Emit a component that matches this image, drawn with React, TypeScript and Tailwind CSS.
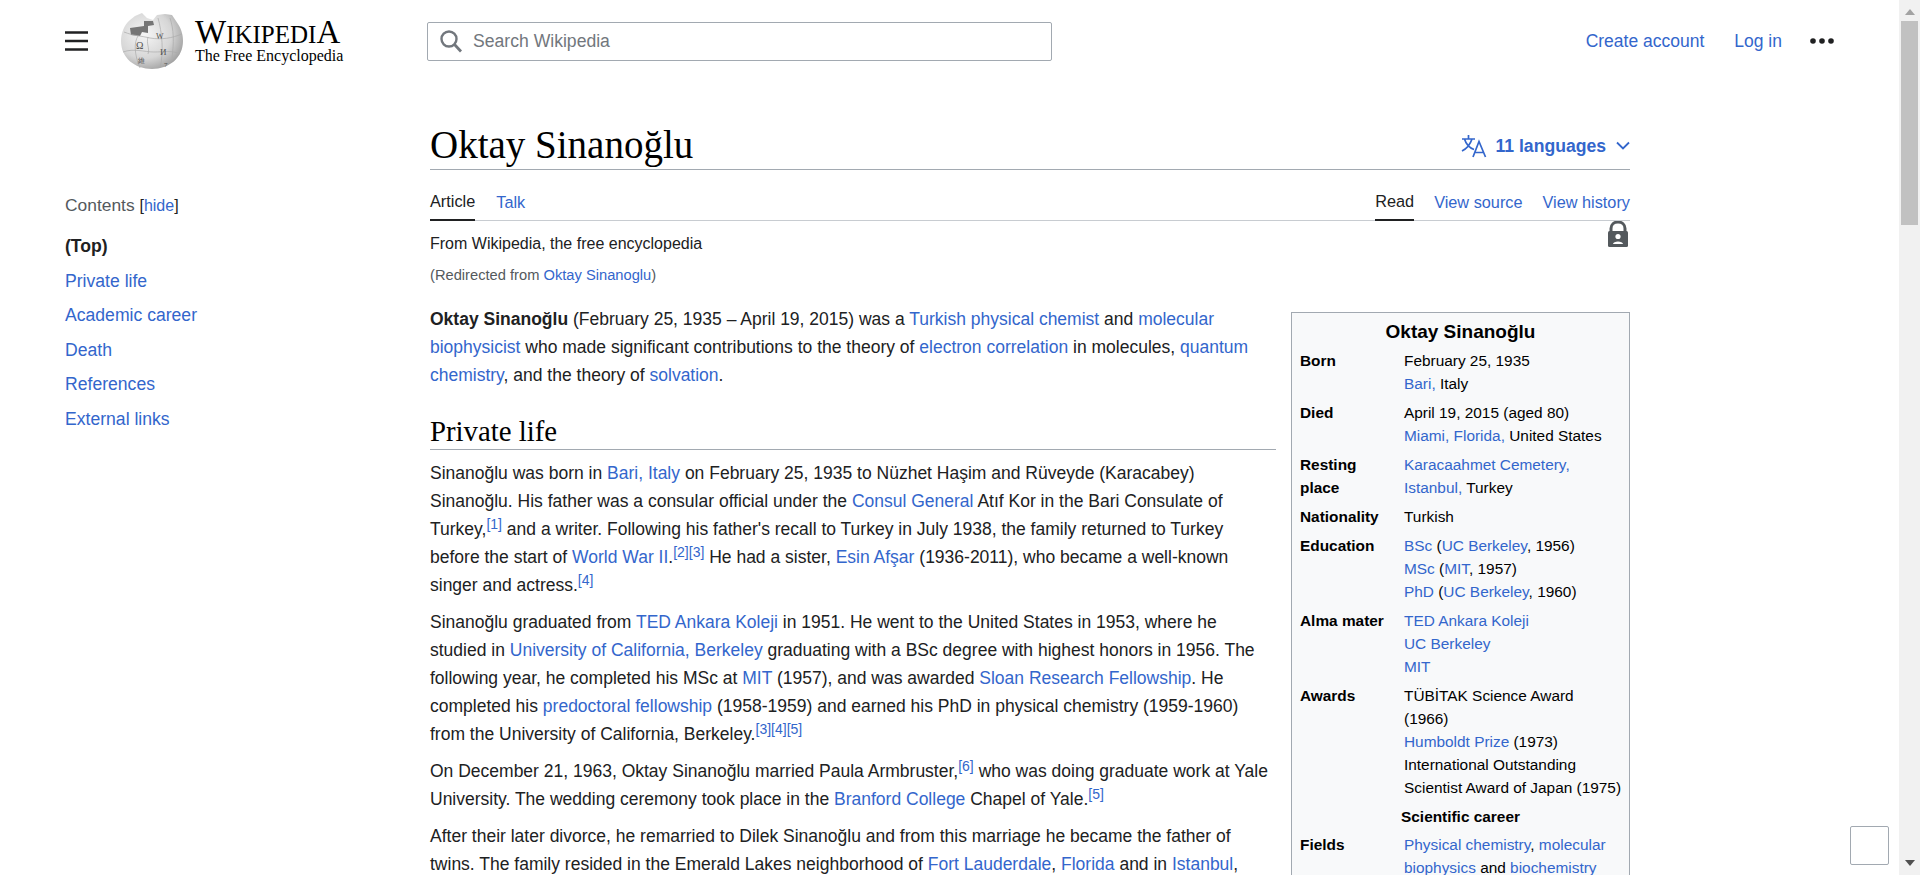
import React from "react";

const A = ({ children }: { children: React.ReactNode }) => <a className="text-[#3366cc]">{children}</a>;
const Sup = ({ children }: { children: React.ReactNode }) => (
  <sup className="text-[14px] leading-[0] top-0 align-[6px] text-[#3366cc]">{children}</sup>
);

function Globe() {
  return (
    <svg width="64" height="58" viewBox="0 0 64 58" className="shrink-0">
      <defs>
        <radialGradient id="g" cx="38%" cy="38%" r="72%">
          <stop offset="0%" stopColor="#f6f6f6" />
          <stop offset="60%" stopColor="#d6d6d6" />
          <stop offset="100%" stopColor="#989898" />
        </radialGradient>
      </defs>
      <path d="M10 8 L15 4 L22 1 L27 6 L33 8 L37 3 L45 2 L52 3 L58 12 C62 18 63 24 63 29 C63 46 49 57 32 57 C15 57 1 46 1 29 C1 21 4 13 10 8 Z" fill="url(#g)" />
      <path d="M10 16 L24 14 L24 9 L33 9 L34 13 L28 14 L28 21 L22 20 L20 24 L11 23 Z" fill="#757575" />
      <g fill="none" stroke="#ababab" strokeWidth="0.7">
        <path d="M4 20 C14 24 22 24 30 26 C42 28 52 26 62 22" />
        <path d="M3 40 C14 36 24 40 34 40 C44 40 52 38 60 42" />
        <path d="M18 24 C14 30 14 42 20 56" />
        <path d="M38 6 C42 20 44 40 40 56" />
        <path d="M28 25 C26 32 30 36 28 42" />
        <path d="M50 6 C54 18 54 30 52 46" />
      </g>
      <g fontFamily="'Liberation Serif', serif" fill="#505050">
        <text x="16" y="37" fontSize="10">Ω</text>
        <text x="36" y="27" fontSize="8">W</text>
        <text x="40" y="43" fontSize="9">И</text>
        <text x="18" y="51" fontSize="7">維</text>
        <text x="44" y="55" fontSize="7">7</text>
      </g>
    </svg>
  );
}

const rows: { label: React.ReactNode; lines: React.ReactNode[] }[] = [
  { label: "Born", lines: ["February 25, 1935", <><A>Bari</A><A>,</A> Italy</>] },
  { label: "Died", lines: ["April 19, 2015 (aged 80)", <><A>Miami</A><A>,</A> <A>Florida</A><A>,</A> United States</>] },
  { label: <>Resting<br />place</>, lines: [<A>Karacaahmet Cemetery,</A>, <><A>Istanbul</A><A>,</A> Turkey</>] },
  { label: "Nationality", lines: ["Turkish"] },
  { label: "Education", lines: [<><A>BSc</A> (<A>UC Berkeley</A>, 1956)</>, <><A>MSc</A> (<A>MIT</A>, 1957)</>, <><A>PhD</A> (<A>UC Berkeley</A>, 1960)</>] },
  { label: "Alma mater", lines: [<A>TED Ankara Koleji</A>, <A>UC Berkeley</A>, <A>MIT</A>] },
  { label: "Awards", lines: ["TÜBİTAK Science Award", "(1966)", <><A>Humboldt Prize</A> (1973)</>, "International Outstanding", "Scientist Award of Japan (1975)"] },
];

function Infobox() {
  return (
    <aside className="w-[339px] shrink-0 ml-[15px] mt-[22px] h-[700px] border border-[#a2a9b1] bg-[#f8f9fa] text-[15.4px] leading-[23px] text-[#000] px-[8px] pt-[2px]">
      <div className="text-center text-[19px] font-bold leading-[33px] mb-[1px]">Oktay Sinanoğlu</div>
      {rows.map((r, i) => (
        <div key={i} className="flex mb-[6px]">
          <div className="w-[104px] shrink-0 font-bold">{r.label}</div>
          <div className="whitespace-nowrap">
            {r.lines.map((l, j) => <div key={j}>{l}</div>)}
          </div>
        </div>
      ))}
      <div className="text-center font-bold mt-[4px] mb-[5px] leading-[23px]">Scientific career</div>
      <div className="flex">
        <div className="w-[104px] shrink-0 font-bold">Fields</div>
        <div className="whitespace-nowrap">
          <div><A>Physical chemistry</A>, <A>molecular</A></div>
          <div><A>biophysics</A> and <A>biochemistry</A></div>
        </div>
      </div>
    </aside>
  );
}

function Scrollbar() {
  return (
    <div className="w-[21px] shrink-0 h-full bg-[#f1f1f1] flex flex-col items-center">
      <svg width="10" height="6" viewBox="0 0 10 6" className="mt-[9px] mb-[6px]"><path d="M5 0 L10 6 H0 Z" fill="#a3a3a3" /></svg>
      <div className="w-[17px] h-[204px] bg-[#c1c1c1]" />
      <svg width="10" height="6" viewBox="0 0 10 6" className="mt-auto mb-[9px]"><path d="M5 6 L0 0 H10 Z" fill="#505050" /></svg>
    </div>
  );
}

export default function App() {
  return (
    <div className="h-[875px] w-full flex overflow-hidden bg-white font-['Liberation_Sans',Arial,sans-serif] text-[#202122] relative">
      <div className="flex-1 min-w-0 h-full overflow-hidden">
        {/* Header */}
        <header className="h-[80px] pt-[2px] flex items-center pl-[65px] pr-[65px]">
          <svg width="25" height="20" viewBox="0 0 25 20" className="shrink-0">
            <path d="M0 1.5 H23 M0 10 H23 M0 18.5 H23" stroke="#202122" strokeWidth="2.6" />
          </svg>
          <div className="ml-[30px] flex items-center">
            <Globe />
            <div className="ml-[11px] w-[160px] font-['Liberation_Serif',serif] text-black">
              <div className="text-[33px] leading-[30px] whitespace-nowrap">
                W<span className="text-[25px]">IKIPEDI</span>A
              </div>
              <div className="text-[16px] leading-[18px] whitespace-nowrap -mt-[3px]">The Free Encyclopedia</div>
            </div>
          </div>
          <div className="ml-[72px] w-[625px] h-[39px] border border-[#a2a9b1] rounded-[2px] flex items-center pl-[11px] shrink-0">
            <svg width="24" height="24" viewBox="0 0 24 24" className="shrink-0">
              <circle cx="10" cy="10" r="7.5" fill="none" stroke="#72777d" strokeWidth="2.4" />
              <path d="M15.5 15.5 L22 22.5" stroke="#72777d" strokeWidth="2.8" />
            </svg>
            <span className="ml-[10px] text-[17.6px] text-[#72777d]">Search Wikipedia</span>
          </div>
          <nav className="ml-auto flex items-center text-[17.5px] text-[#3366cc]">
            <span>Create account</span>
            <span className="ml-[30px]">Log in</span>
            <svg width="24" height="6" viewBox="0 0 24 6" className="ml-[28px]">
              <circle cx="3" cy="3" r="2.8" fill="#202122" /><circle cx="12" cy="3" r="2.8" fill="#202122" /><circle cx="21" cy="3" r="2.8" fill="#202122" />
            </svg>
          </nav>
        </header>

        <div className="flex pl-[65px]">
          {/* TOC */}
          <div className="w-[365px] shrink-0 pt-[115px]">
            <div className="text-[17.4px] text-[#54595d] leading-[20px]">
              Contents <span className="text-[16px] text-[#202122]">[<A>hide</A>]</span>
            </div>
            <ul className="mt-[13px] text-[17.6px] leading-[34.6px] text-[#3366cc]">
              <li className="font-bold text-[#202122]">(Top)</li>
              <li>Private life</li>
              <li>Academic career</li>
              <li>Death</li>
              <li>References</li>
              <li>External links</li>
            </ul>
          </div>

          {/* Main */}
          <main className="w-[1200px] shrink-0">
            <div className="h-[90px] border-b border-[#a2a9b1] flex items-end justify-between pb-[1px]">
              <h1 className="font-['Liberation_Serif',serif] text-[39px] leading-[46px] text-black">Oktay Sinanoğlu</h1>
              <div className="flex items-center text-[#3366cc] font-bold text-[17.6px] mb-[9px]">
                <svg width="26" height="24" viewBox="0 0 26 24" className="mr-[8px]" fill="none" stroke="#3366cc" strokeWidth="1.7">
                  <path d="M1 5 H14 M7.5 1 V5 M11 5 C9 11 5 15 1 17 M3.5 5 C5 10 9 14 13 15.5" />
                  <path d="M12 23 L18 7.5 L24.5 23 M14 18.5 H22.5" />
                </svg>
                11 languages
                <svg width="14" height="9" viewBox="0 0 14 9" className="ml-[10px]" fill="none" stroke="#3366cc" strokeWidth="1.8"><path d="M1 1.5 L7 7.5 L13 1.5" /></svg>
              </div>
            </div>

            <div className="h-[51px] flex justify-between border-b border-[#c8ccd1] text-[16.3px]">
              <div className="flex gap-[21px]">
                <span className="h-[51px] flex items-center border-b-2 border-[#202122] pt-[13px]">Article</span>
                <span className="h-[51px] flex items-center text-[#3366cc] pt-[13px]">Talk</span>
              </div>
              <div className="flex gap-[20px]">
                <span className="h-[51px] flex items-center border-b-2 border-[#202122] pt-[13px]">Read</span>
                <span className="h-[51px] flex items-center text-[#3366cc] pt-[13px]">View source</span>
                <span className="h-[51px] flex items-center text-[#3366cc] pt-[13px]">View history</span>
              </div>
            </div>

            <div className="flex justify-between h-[30px]">
              <div className="text-[16px] leading-[20px] pt-[13px]">From Wikipedia, the free encyclopedia</div>
              <svg width="20" height="26" viewBox="0 0 20 26" className="mr-[2px]">
                <path d="M3 11 V7.5 C3 3.5 6 1 10 1 C14 1 17 3.5 17 7.5 V11" fill="none" stroke="#54595d" strokeWidth="3" />
                <rect x="0" y="10" width="20" height="16" rx="1.5" fill="#54595d" />
                <circle cx="10" cy="15.5" r="2.6" fill="#fff" />
                <path d="M5 23 C5 19.5 15 19.5 15 23 Z" fill="#fff" />
              </svg>
            </div>
            <div className="text-[14.7px] leading-[20px] text-[#54595d] mt-[14px]">(Redirected from <A>Oktay Sinanoglu</A>)</div>

            <div className="flex mt-[5px]">
              <div className="w-[846px] shrink-0 text-[17.5px] leading-[28px] whitespace-nowrap">
                <p className="pt-[15px]">
                  <b>Oktay Sinanoğlu</b> (February 25, 1935 – April 19, 2015) was a <A>Turkish physical chemist</A> and <A>molecular</A><br />
                  <A>biophysicist</A> who made significant contributions to the theory of <A>electron correlation</A> in molecules, <A>quantum</A><br />
                  <A>chemistry</A>, and the theory of <A>solvation</A>.
                </p>
                <h2 className="font-['Liberation_Serif',serif] text-[28.8px] leading-[36px] text-black border-b border-[#a2a9b1] mt-[24px] h-[37px]">Private life</h2>
                <p className="mt-[9px]">
                  Sinanoğlu was born in <A>Bari, Italy</A> on February 25, 1935 to Nüzhet Haşim and Rüveyde (Karacabey)<br />
                  Sinanoğlu. His father was a consular official under the <A>Consul General</A> Atıf Kor in the Bari Consulate of<br />
                  Turkey,<Sup>[1]</Sup> and a writer. Following his father's recall to Turkey in July 1938, the family returned to Turkey<br />
                  before the start of <A>World War II</A>.<Sup>[2][3]</Sup> He had a sister, <A>Esin Afşar</A> (1936-2011), who became a well-known<br />
                  singer and actress.<Sup>[4]</Sup>
                </p>
                <p className="mt-[9px]">
                  Sinanoğlu graduated from <A>TED Ankara Koleji</A> in 1951. He went to the United States in 1953, where he<br />
                  studied in <A>University of California, Berkeley</A> graduating with a BSc degree with highest honors in 1956. The<br />
                  following year, he completed his MSc at <A>MIT</A> (1957), and was awarded <A>Sloan Research Fellowship</A>. He<br />
                  completed his <A>predoctoral fellowship</A> (1958-1959) and earned his PhD in physical chemistry (1959-1960)<br />
                  from the University of California, Berkeley.<Sup>[3][4][5]</Sup>
                </p>
                <p className="mt-[9px]">
                  On December 21, 1963, Oktay Sinanoğlu married Paula Armbruster,<Sup>[6]</Sup> who was doing graduate work at Yale<br />
                  University. The wedding ceremony took place in the <A>Branford College</A> Chapel of Yale.<Sup>[5]</Sup>
                </p>
                <p className="mt-[9px]">
                  After their later divorce, he remarried to Dilek Sinanoğlu and from this marriage he became the father of<br />
                  twins. The family resided in the Emerald Lakes neighborhood of <A>Fort Lauderdale</A>, <A>Florida</A> and in <A>Istanbul</A>,
                </p>
              </div>
              <Infobox />
            </div>
          </main>
        </div>
      </div>
      <Scrollbar />
      <div className="absolute left-[1850px] top-[826px] w-[39px] h-[39px] border border-[#a2a9b1] rounded-[2px] bg-white" />
    </div>
  );
}
